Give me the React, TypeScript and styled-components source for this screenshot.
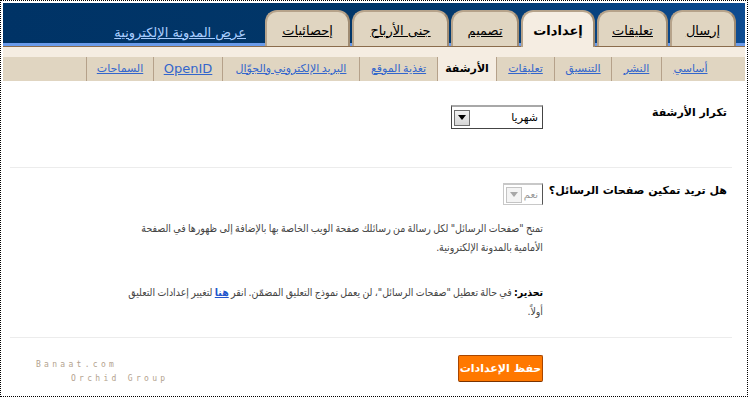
import styled, { createGlobalStyle } from "styled-components";

const GlobalStyle = createGlobalStyle`
  html, body {
    margin: 0;
    padding: 0;
    background: #fff;
  }
  body {
    font-family: "DejaVu Sans", "Noto Sans", sans-serif;
  }
`;

const tabs = [
  { label: "إرسال", width: 66 },
  { label: "تعليقات", width: 71 },
  { label: "إعدادات", width: 74, active: true },
  { label: "تصميم", width: 68 },
  { label: "جنى الأرباح", width: 97 },
  { label: "إحصائيات", width: 85 },
];

const subTabs = [
  { label: "أساسي", width: 58 },
  { label: "النشر", width: 50 },
  { label: "التنسيق", width: 57 },
  { label: "تعليقات", width: 58 },
  { label: "الأرشفة", width: 59, active: true },
  { label: "تغذية الموقع", width: 78 },
  { label: "البريد الإلكتروني والجوّال", width: 137 },
  { label: "OpenID", width: 69, latin: true },
  { label: "السماحات", width: 67 },
];

function Select({ value, disabled }: { value: string; disabled?: boolean }) {
  return (
    <SelectBox $disabled={disabled}>
      <SelectValue $disabled={disabled}>{value}</SelectValue>
      <SelectArrow $disabled={disabled}>
        <svg width="8" height="5" viewBox="0 0 8 5">
          <path d="M0 0h8L4 5z" fill={disabled ? "#a8a8a8" : "#000"} />
        </svg>
      </SelectArrow>
    </SelectBox>
  );
}

export default function App() {
  return (
    <>
      <GlobalStyle />
      <Frame>
        <Header>
          {tabs.map((t) => (
            <Tab key={t.label} $w={t.width} $active={t.active}>
              {t.label}
            </Tab>
          ))}
          <BlogLink>عرض المدونة الإلكترونية</BlogLink>
        </Header>
        <CreamBar />
        <SubNav>
          {subTabs.map((s) => (
            <SubTab
              key={s.label}
              $w={s.width}
              $active={s.active}
              $latin={s.latin}
            >
              {s.label}
            </SubTab>
          ))}
        </SubNav>

        <Main>
          <Row $top={24} $bottom={38}>
            <Label>تكرار الأرشفة</Label>
            <Field>
              <Select value="شهريا" />
            </Field>
          </Row>

          <Row $top={15} $bottom={16}>
            <Label>هل تريد تمكين صفحات الرسائل؟</Label>
            <Field>
              <Select value="نعم" disabled />
              <Para>
                تمنح "صفحات الرسائل" لكل رسالة من رسائلك صفحة الويب الخاصة بها
                بالإضافة إلى ظهورها في الصفحة الأمامية بالمدونة الإلكترونية.
              </Para>
              <Para>
                <b>تحذير:</b> في حالة تعطيل "صفحات الرسائل"، لن يعمل نموذج
                التعليق المضمّن. انقر <InlineLink>هنا</InlineLink> لتغيير
                إعدادات التعليق أولاً.
              </Para>
            </Field>
          </Row>

          <Footer>
            <SaveButton>حفظ الإعدادات</SaveButton>
            <Credits>
              <span>Banaat.com</span>
              <CreditLine2>Orchid Group</CreditLine2>
            </Credits>
          </Footer>
        </Main>
      </Frame>
    </>
  );
}

const Frame = styled.div`
  width: 748px;
  height: 397px;
  box-sizing: border-box;
  border: 1px dotted #000;
  padding: 2px;
  overflow: hidden;
`;

const Header = styled.div`
  direction: rtl;
  display: flex;
  align-items: flex-end;
  height: 43px;
  padding-right: 9px;
  background: linear-gradient(to bottom, transparent 40px, #6a9bea 40px),
    linear-gradient(to right, #003366 0%, #023769 55%, #0d4b91 100%);
`;

const Tab = styled.a<{ $w: number; $active?: boolean }>`
  position: relative;
  z-index: 1;
  box-sizing: border-box;
  width: ${(p) => p.$w}px;
  height: ${(p) => (p.$active ? 37 : 36)}px;
  margin-left: 2px;
  margin-bottom: ${(p) => (p.$active ? -1 : 0)}px;
  padding-top: 2px;
  display: flex;
  align-items: center;
  justify-content: center;
  background: ${(p) => (p.$active ? "#f5ede2" : "#e0d5c1")};
  border: 2px solid #b6a38b;
  border-right-color: #9f8b72;
  border-bottom: none;
  border-radius: 12px 12px 0 0;
  color: #000;
  font-size: 13px;
  font-weight: ${(p) => (p.$active ? "bold" : "normal")};
  text-decoration: ${(p) => (p.$active ? "none" : "underline")};
  white-space: nowrap;
`;

const BlogLink = styled.a`
  margin-right: 17px;
  margin-bottom: 6px;
  color: #a9cdff;
  font-size: 13px;
  text-decoration: underline;
  white-space: nowrap;
`;

const CreamBar = styled.div`
  height: 10px;
  border-top: 1px solid #8b6c4c;
  background: #f5ede2;
`;

const SubNav = styled.div`
  direction: rtl;
  display: flex;
  height: 24px;
  padding-right: 26px;
  background: #e0d5c1;
`;

const SubTab = styled.a<{ $w: number; $active?: boolean; $latin?: boolean }>`
  box-sizing: border-box;
  width: ${(p) => p.$w}px;
  display: flex;
  align-items: center;
  justify-content: center;
  padding-bottom: 2px;
  border-left: 1px solid #b5a18a;
  background: ${(p) => (p.$active ? "#f5ede2" : "transparent")};
  color: ${(p) => (p.$active ? "#000" : "#3366cc")};
  font-size: ${(p) => (p.$latin ? 13 : 11)}px;
  font-weight: ${(p) => (p.$active ? "bold" : "normal")};
  text-decoration: ${(p) => (p.$active ? "none" : "underline")};
  white-space: nowrap;
  word-spacing: -1px;
`;

const Main = styled.div`
  direction: rtl;
  margin: 0 13px 0 7px;
`;

const Row = styled.div<{ $top: number; $bottom: number }>`
  display: grid;
  grid-template-columns: 184px 420px;
  padding: ${(p) => p.$top}px 5px ${(p) => p.$bottom}px 0;
  border-bottom: 1px solid #ececec;
`;

const Label = styled.div`
  font-size: 11px;
  font-weight: bold;
  color: #000;
  padding-top: 1px;
`;

const Field = styled.div`
  display: flex;
  flex-direction: column;
  align-items: flex-start;
`;

const SelectBox = styled.div<{ $disabled?: boolean }>`
  box-sizing: border-box;
  display: flex;
  align-items: center;
  justify-content: space-between;
  width: ${(p) => (p.$disabled ? 40 : 92)}px;
  height: ${(p) => (p.$disabled ? 22 : 24)}px;
  padding: 0 4px 0 2px;
  border: 1px solid ${(p) => (p.$disabled ? "#c8c8c8" : "#444")};
  border-top: 2px solid ${(p) => (p.$disabled ? "#c8c8c8" : "#a8a8a8")};
  border-right-color: ${(p) => (p.$disabled ? "#555" : "#444")};
  background: #fff;
`;

const SelectValue = styled.span<{ $disabled?: boolean }>`
  font-size: ${(p) => (p.$disabled ? 10 : 11)}px;
  color: ${(p) => (p.$disabled ? "#999" : "#000")};
`;

const SelectArrow = styled.span<{ $disabled?: boolean }>`
  box-sizing: border-box;
  display: flex;
  align-items: center;
  justify-content: center;
  width: 16px;
  height: 16px;
  border: 1px solid ${(p) => (p.$disabled ? "#c4c4c4" : "#6e6e6e")};
  background: ${(p) =>
    p.$disabled ? "#f4f4f4" : "linear-gradient(#f2f2f2, #d6d6d6)"};
`;

const Para = styled.p`
  margin: 14px 0 26px;
  width: 420px;
  font-family: "DejaVu Sans Condensed", "DejaVu Sans", sans-serif;
  font-stretch: semi-condensed;
  font-size: 10.5px;
  line-height: 19px;
  word-spacing: -0.7px;
  color: #444;

  & + & {
    margin-top: 0;
    margin-bottom: 0;
  }

  b {
    color: #000;
  }
`;

const InlineLink = styled.a`
  color: #2255cc;
  font-weight: bold;
  text-decoration: underline;
`;

const Footer = styled.div`
  display: flex;
  align-items: flex-start;
  justify-content: space-between;
  padding: 17px 189px 0 26px;
`;

const SaveButton = styled.button`
  box-sizing: border-box;
  width: 85px;
  height: 27px;
  padding: 0;
  border: 1px solid #a84600;
  border-bottom-color: #7a3300;
  border-radius: 2px;
  background: #ff7800;
  color: #fff;
  font-family: "DejaVu Sans", sans-serif;
  font-size: 11px;
  font-weight: bold;
`;

const Credits = styled.div`
  direction: ltr;
  display: flex;
  flex-direction: column;
  margin-top: 3px;
  font-family: "DejaVu Sans Mono", monospace;
  font-size: 8px;
  line-height: 14px;
  letter-spacing: 3.3px;
  color: #b3a28e;
`;

const CreditLine2 = styled.span`
  padding-left: 35px;
`;
